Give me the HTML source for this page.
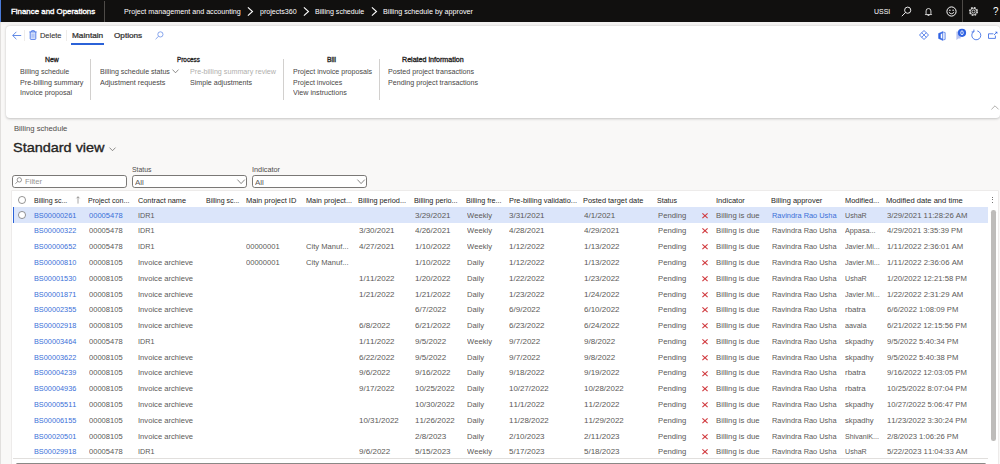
<!DOCTYPE html><html><head><meta charset="utf-8"><title>Billing schedule by approver</title><style>

html,body{margin:0;padding:0}
body{width:1000px;height:464px;overflow:hidden;position:relative;background:#f9f8f7;font-family:"Liberation Sans", sans-serif;color:#323130}
.abs{position:absolute}
.t{position:absolute;white-space:nowrap;line-height:12px;font-kerning:none;transform-origin:0 50%;color:#5c5a58}
.h{color:#252423}
.l{color:#3a6fd8}
.w{color:#fff}
.g{color:#b1afad}
.d{color:#323130}
.a{color:#484644}
svg{position:absolute;overflow:visible}

</style></head><body>
<div class="abs" style="left:0;top:0;width:1000px;height:21.6px;background:#11100f"></div>
<div class="abs" style="left:0;top:0;width:1px;height:21.6px;background:#4a7ad8"></div>
<div class="t w" style="left:11.00px;top:5.58px;font-size:7.57px;-webkit-text-stroke:0.34px currentColor;transform:scaleX(1.0426);">Finance and Operations</div>
<div class="abs" style="left:104.1px;top:0.6px;width:0.7px;height:21.0px;background:#4e4b48"></div>
<div class="t w" style="left:123.70px;top:5.77px;font-size:7.01px;transform:scaleX(1.0246);">Project management and accounting</div>
<div class="t w" style="left:259.50px;top:5.77px;font-size:7.01px;transform:scaleX(1.0140);">projects360</div>
<div class="t w" style="left:315.00px;top:5.77px;font-size:7.01px;transform:scaleX(1.0110);">Billing schedule</div>
<div class="t w" style="left:382.50px;top:5.77px;font-size:7.01px;transform:scaleX(1.0264);">Billing schedule by approver</div>
<svg style="left:247.3px;top:6.8px" width="6.4" height="9" viewBox="0 0 6.4 9"><path d="M0.9 0.4 L5.5 4.5 L0.9 8.6" fill="none" stroke="#fff" stroke-width="1.1"/></svg>
<svg style="left:303.0px;top:6.8px" width="6.4" height="9" viewBox="0 0 6.4 9"><path d="M0.9 0.4 L5.5 4.5 L0.9 8.6" fill="none" stroke="#fff" stroke-width="1.1"/></svg>
<svg style="left:371.1px;top:6.8px" width="6.4" height="9" viewBox="0 0 6.4 9"><path d="M0.9 0.4 L5.5 4.5 L0.9 8.6" fill="none" stroke="#fff" stroke-width="1.1"/></svg>
<div class="t w" style="left:874.00px;top:5.57px;font-size:7.01px;transform:scaleX(0.9901);">USSI</div>
<svg style="left:901px;top:6px" width="11" height="11" viewBox="0 0 11 11"><circle cx="6.7" cy="4.2" r="3.1" fill="none" stroke="#fff" stroke-width="0.9"/><path d="M4.5 6.5 L0.8 10.2" stroke="#fff" stroke-width="0.9"/></svg>
<svg style="left:924.4px;top:6.6px" width="9" height="9.9" viewBox="0 0 10 11"><path d="M2.3 7.6 V4.4 A2.7 2.7 0 0 1 7.7 4.4 V7.6 L8.5 8.4 H1.5 Z" fill="none" stroke="#fff" stroke-width="0.9" stroke-linejoin="round"/><path d="M4 9.4 H6" stroke="#fff" stroke-width="0.9"/></svg>
<svg style="left:945.5px;top:5.8px" width="11" height="11" viewBox="0 0 11 11"><circle cx="5.5" cy="5.5" r="4.6" fill="none" stroke="#fff" stroke-width="1.0"/><circle cx="3.9" cy="4.2" r="0.7" fill="#fff"/><circle cx="7.1" cy="4.2" r="0.7" fill="#fff"/><path d="M2.9 6.2 Q5.5 9.3 8.1 6.2" fill="none" stroke="#fff" stroke-width="0.9"/></svg>
<div class="abs" style="left:962.4px;top:0;width:0.7px;height:21.6px;background:#4e4b48"></div>
<svg style="left:968.4px;top:6px" width="11" height="11" viewBox="0 0 11 11"><circle cx="5.5" cy="5.5" r="3.9" fill="none" stroke="#fff" stroke-width="1.2" stroke-dasharray="1.75 1.313" opacity="0.9"/><circle cx="5.5" cy="5.5" r="3.2" fill="none" stroke="#fff" stroke-width="0.7"/><circle cx="5.5" cy="5.5" r="1.5" fill="none" stroke="#fff" stroke-width="0.75"/></svg>
<div class="t w" style="left:993.2px;top:4.3px;font-size:11.2px;line-height:14px;transform:scaleX(0.88)">?</div>
<div class="abs" style="left:0;top:21.6px;width:1000px;height:4.4px;background:linear-gradient(#f1f0ef,#f9f8f7)"></div>
<div class="abs" style="left:5.5px;top:25.7px;width:994.1px;height:92.3px;background:#fff;border-radius:4px;box-shadow:0 0.6px 2.6px rgba(0,0,0,0.22)"></div>
<svg style="left:11.6px;top:31px" width="10" height="9" viewBox="0 0 10 9"><path d="M9.2 4.5 H0.8 M4.4 0.8 L0.7 4.5 L4.4 8.2" fill="none" stroke="#3b6fe0" stroke-width="0.8"/></svg>
<div class="abs" style="left:24.4px;top:30px;width:0.6px;height:11.4px;background:#eeecea"></div>
<svg style="left:29.4px;top:30.4px" width="8" height="10" viewBox="0 0 8 10"><rect x="1.5" y="2.3" width="5" height="6.6" fill="#dfe8fc"/><path d="M0.4 1.9 H7.6 M2.7 1.9 V0.7 H5.3 V1.9 M1.2 1.9 V8.6 Q1.2 9.4 2 9.4 H6 Q6.8 9.4 6.8 8.6 V1.9" fill="none" stroke="#2f62e2" stroke-width="0.8"/><path d="M3.1 3.6 V7.8 M4.9 3.6 V7.8" stroke="#5b83ea" stroke-width="0.55"/></svg>
<div class="t " style="left:39.80px;top:30.42px;font-size:7.46px;transform:scaleX(0.9972);color:#323130;-webkit-text-stroke:0.1px #323130">Delete</div>
<div class="abs" style="left:66px;top:30px;width:0.6px;height:11.4px;background:#eeecea"></div>
<div class="t d" style="left:72.00px;top:30.39px;font-size:7.54px;-webkit-text-stroke:0.24px currentColor;transform:scaleX(1.0952);">Maintain</div>
<div class="abs" style="left:71.3px;top:42.8px;width:32.4px;height:1.9px;background:#2b62d8"></div>
<div class="t d" style="left:113.80px;top:30.39px;font-size:7.54px;-webkit-text-stroke:0.24px currentColor;transform:scaleX(1.0857);">Options</div>
<svg style="left:154.8px;top:31.4px" width="9" height="9" viewBox="0 0 9 9"><circle cx="5.4" cy="3.4" r="2.6" fill="none" stroke="#6a8fe8" stroke-width="0.8"/><path d="M3.5 5.3 L0.6 8.2" stroke="#6a8fe8" stroke-width="0.8"/></svg>
<svg style="left:919.2px;top:30.3px" width="10" height="10" viewBox="0 0 10 10"><path d="M5 0.5 L9.5 5 L5 9.5 L0.5 5 Z" fill="none" stroke="#2f62e2" stroke-width="0.8" stroke-linejoin="round"/><path d="M2.6 2.6 L7.4 7.4 M7.4 2.6 L2.6 7.4" fill="none" stroke="#2f62e2" stroke-width="0.7"/></svg>
<svg style="left:937.7px;top:30.6px" width="8" height="10" viewBox="0 0 8 10"><path d="M4.5 0.8 L7.2 1.6 V8.4 L4.5 9.2 Z" fill="#dbe4fb" stroke="#2f62e2" stroke-width="0.6" stroke-linejoin="round"/><path d="M0.5 2.5 L4.5 0.7 V2.1 L2.5 3 V7 L4.5 7.9 V9.3 L0.5 7.5 Z" fill="#2f62e2" stroke="#2f62e2" stroke-width="0.4" stroke-linejoin="round"/></svg>
<svg style="left:956px;top:28px" width="12" height="13" viewBox="0 0 12 13"><path d="M0.4 3.6 H4.6 V10.4 H2.4 L0.4 11.9 Z" fill="#b7c2f1"/><circle cx="6.0" cy="4.8" r="4.1" fill="#2f62e2"/><ellipse cx="6.0" cy="4.8" rx="1.25" ry="2.0" fill="none" stroke="#fff" stroke-width="0.85"/></svg>
<svg style="left:970.8px;top:30.2px" width="10" height="11" viewBox="0 0 10 11"><path d="M2.7 1.6 A4.5 4.5 0 1 0 6.3 0.9" fill="none" stroke="#2f62e2" stroke-width="0.8"/><path d="M2.9 -0.4 V1.9 H0.6" fill="none" stroke="#2f62e2" stroke-width="0.8"/></svg>
<svg style="left:988px;top:30.6px" width="10" height="9" viewBox="0 0 10 9"><path d="M5.4 2.8 H0.5 V7.4 H7.4 V4.6" fill="none" stroke="#2f62e2" stroke-width="0.8"/><path d="M6.0 4.0 L8.6 1.4" fill="none" stroke="#2f62e2" stroke-width="0.8"/><path d="M7.0 0.7 H9.3 V3.0 Z" fill="#2f62e2"/></svg>
<div class="t h" style="left:44.50px;top:53.75px;font-size:6.48px;-webkit-text-stroke:0.30px currentColor;transform:scaleX(1.0601);">New</div>
<div class="t a" style="left:19.50px;top:66.07px;font-size:7.01px;transform:scaleX(1.0125);">Billing schedule</div>
<div class="t a" style="left:19.50px;top:76.57px;font-size:7.01px;transform:scaleX(1.0252);">Pre-billing summary</div>
<div class="t a" style="left:19.50px;top:86.97px;font-size:7.01px;transform:scaleX(1.0236);">Invoice proposal</div>
<div class="abs" style="left:90.2px;top:58.6px;width:0.6px;height:41px;background:#d2d0ce"></div>
<div class="t h" style="left:176.50px;top:53.75px;font-size:6.48px;-webkit-text-stroke:0.30px currentColor;transform:scaleX(0.9820);">Process</div>
<div class="t a" style="left:99.50px;top:66.07px;font-size:7.01px;transform:scaleX(1.0092);">Billing schedule status</div>
<svg style="left:172.4px;top:69.2px" width="7" height="5" viewBox="0 0 7 5"><path d="M0.5 0.6 L3.5 3.8 L6.5 0.6" fill="none" stroke="#605e5c" stroke-width="0.7"/></svg>
<div class="t a" style="left:99.50px;top:76.57px;font-size:7.01px;transform:scaleX(1.0237);">Adjustment requests</div>
<div class="t g" style="left:189.50px;top:66.07px;font-size:7.01px;transform:scaleX(1.0234);">Pre-billing summary review</div>
<div class="t a" style="left:189.50px;top:76.57px;font-size:7.01px;transform:scaleX(1.0155);">Simple adjustments</div>
<div class="abs" style="left:283.2px;top:58.6px;width:0.6px;height:41px;background:#d2d0ce"></div>
<div class="t h" style="left:327.00px;top:53.75px;font-size:6.48px;-webkit-text-stroke:0.30px currentColor;transform:scaleX(1.0440);">Bill</div>
<div class="t a" style="left:292.50px;top:66.07px;font-size:7.01px;transform:scaleX(1.0169);">Project invoice proposals</div>
<div class="t a" style="left:292.50px;top:76.57px;font-size:7.01px;transform:scaleX(1.0044);">Project invoices</div>
<div class="t a" style="left:292.50px;top:86.97px;font-size:7.01px;transform:scaleX(1.0229);">View instructions</div>
<div class="abs" style="left:378.7px;top:58.6px;width:0.6px;height:41px;background:#d2d0ce"></div>
<div class="t h" style="left:402.20px;top:53.75px;font-size:6.48px;-webkit-text-stroke:0.30px currentColor;transform:scaleX(1.0983);">Related information</div>
<div class="t a" style="left:387.70px;top:66.07px;font-size:7.01px;transform:scaleX(1.0200);">Posted project transactions</div>
<div class="t a" style="left:387.70px;top:76.57px;font-size:7.01px;transform:scaleX(1.0202);">Pending project transactions</div>
<svg style="left:990.6px;top:104.8px" width="8" height="5" viewBox="0 0 8 5"><path d="M0.4 4.4 L4 0.8 L7.6 4.4" fill="none" stroke="#a9a7a5" stroke-width="0.9"/></svg>
<div class="t " style="left:13.50px;top:123.06px;font-size:7.34px;transform:scaleX(1.0483);color:#4f4d4b">Billing schedule</div>
<div class="t " style="left:13.30px;top:141.68px;font-size:13.34px;-webkit-text-stroke:0.35px currentColor;transform:scaleX(1.0837);color:#252423;line-height:20px;margin-top:-4px">Standard view</div>
<svg style="left:108.9px;top:146.6px" width="7" height="5" viewBox="0 0 7 5"><path d="M0.5 0.6 L3.5 3.7 L6.5 0.6" fill="none" stroke="#605e5c" stroke-width="0.7"/></svg>
<div class="t " style="left:132.20px;top:163.86px;font-size:7.34px;transform:scaleX(0.9361);color:#4f4d4b">Status</div>
<div class="t " style="left:251.60px;top:163.86px;font-size:7.34px;transform:scaleX(0.9981);color:#4f4d4b">Indicator</div>
<div class="abs" style="left:12.1px;top:175.1px;width:115.4px;height:13.1px;box-sizing:border-box;border:1px solid #7a7876;border-radius:2.8px;background:#fff"></div>
<div class="abs" style="left:132px;top:175.1px;width:114.6px;height:13.1px;box-sizing:border-box;border:1px solid #7a7876;border-radius:2.8px;background:#fff"></div>
<div class="abs" style="left:251.6px;top:175.1px;width:115.3px;height:13.1px;box-sizing:border-box;border:1px solid #7a7876;border-radius:2.8px;background:#fff"></div>
<svg style="left:14.8px;top:177.3px" width="7.4" height="7.4" viewBox="0 0 7 7"><circle cx="4.1" cy="2.7" r="2.1" fill="none" stroke="#605e5c" stroke-width="0.6"/><path d="M2.6 4.2 L0.4 6.4" stroke="#605e5c" stroke-width="0.6"/></svg>
<div class="t " style="left:25.00px;top:176.15px;font-size:7.65px;transform:scaleX(1.0071);color:#979593">Filter</div>
<div class="t " style="left:135.40px;top:176.55px;font-size:7.65px;transform:scaleX(1.0419);">All</div>
<div class="t " style="left:255.00px;top:176.55px;font-size:7.65px;transform:scaleX(1.0419);">All</div>
<svg style="left:236.6px;top:179.0px" width="8.2" height="5.4" viewBox="0 0 8.2 5.4"><path d="M0.4 0.6 L4.1 4.6 L7.8 0.6" fill="none" stroke="#605e5c" stroke-width="0.75"/></svg>
<svg style="left:356.6px;top:179.0px" width="8.2" height="5.4" viewBox="0 0 8.2 5.4"><path d="M0.4 0.6 L4.1 4.6 L7.8 0.6" fill="none" stroke="#605e5c" stroke-width="0.75"/></svg>
<div class="abs" style="left:12.4px;top:191.3px;width:986px;height:273px;background:#fff;box-shadow:0 0 0 0.6px #e4e3e1"></div>
<div class="abs" style="left:12.6px;top:207.0px;width:975px;height:0.5px;background:#e6e4e2"></div>
<div class="abs" style="left:12.6px;top:207.4px;width:975px;height:15.2px;background:#dbe5fa"></div>
<div class="abs" style="left:12.6px;top:207.4px;width:1.6px;height:15.2px;background:#2b62d8"></div>
<svg style="left:18px;top:196.2px" width="8" height="8" viewBox="0 0 8 8"><circle cx="4" cy="4" r="3.55" fill="#fff" stroke="#605e5c" stroke-width="0.65"/></svg>
<div class="t h" style="left:34.20px;top:194.90px;font-size:7.21px;transform:scaleX(0.9668);">Billing sc...</div>
<div class="t h" style="left:88.00px;top:194.90px;font-size:7.21px;transform:scaleX(0.9840);">Project con...</div>
<div class="t h" style="left:137.50px;top:194.90px;font-size:7.21px;transform:scaleX(1.0163);">Contract name</div>
<div class="t h" style="left:205.50px;top:194.90px;font-size:7.21px;transform:scaleX(0.9668);">Billing sc...</div>
<div class="t h" style="left:246.00px;top:194.90px;font-size:7.21px;transform:scaleX(1.0397);">Main project ID</div>
<div class="t h" style="left:305.50px;top:194.90px;font-size:7.21px;transform:scaleX(1.0169);">Main project...</div>
<div class="t h" style="left:358.00px;top:194.90px;font-size:7.21px;transform:scaleX(1.0154);">Billing period...</div>
<div class="t h" style="left:414.20px;top:194.90px;font-size:7.21px;transform:scaleX(1.0090);">Billing perio...</div>
<div class="t h" style="left:466.20px;top:194.90px;font-size:7.21px;transform:scaleX(0.9959);">Billing fre...</div>
<div class="t h" style="left:508.70px;top:194.90px;font-size:7.21px;transform:scaleX(1.0229);">Pre-billing validatio...</div>
<div class="t h" style="left:583.00px;top:194.90px;font-size:7.21px;transform:scaleX(1.0258);">Posted target date</div>
<div class="t h" style="left:657.00px;top:194.90px;font-size:7.21px;transform:scaleX(0.9793);">Status</div>
<div class="t h" style="left:715.70px;top:194.90px;font-size:7.21px;transform:scaleX(1.0442);">Indicator</div>
<div class="t h" style="left:771.20px;top:194.90px;font-size:7.21px;transform:scaleX(1.0322);">Billing approver</div>
<div class="t h" style="left:844.80px;top:194.90px;font-size:7.21px;transform:scaleX(1.0296);">Modified...</div>
<div class="t h" style="left:886.40px;top:194.90px;font-size:7.21px;transform:scaleX(1.0531);">Modified date and time</div>
<svg style="left:76.2px;top:195.6px" width="4" height="8" viewBox="0 0 4 8"><path d="M2 7.6 V0.8 M0.5 2.3 L2 0.7 L3.5 2.3" fill="none" stroke="#605e5c" stroke-width="0.55"/></svg>
<div class="abs" style="left:991.8px;top:196.7px;width:1.1px;height:1.1px;background:#484644;border-radius:50%"></div>
<div class="abs" style="left:991.8px;top:199.39999999999998px;width:1.1px;height:1.1px;background:#484644;border-radius:50%"></div>
<div class="abs" style="left:991.8px;top:202.1px;width:1.1px;height:1.1px;background:#484644;border-radius:50%"></div>
<div class="t l" style="left:34.30px;top:209.66px;font-size:7.62px;transform:scaleX(0.9605);">BS00000261</div>
<div class="t l" style="left:88.90px;top:209.66px;font-size:7.62px;transform:scaleX(0.9940);">00005478</div>
<div class="t " style="left:137.80px;top:209.66px;font-size:7.62px;transform:scaleX(0.9476);">IDR1</div>
<div class="t " style="left:414.70px;top:209.66px;font-size:7.62px;transform:scaleX(1.0497);">3/29/2021</div>
<div class="t " style="left:466.70px;top:209.66px;font-size:7.62px;transform:scaleX(1.0008);">Weekly</div>
<div class="t " style="left:509.20px;top:209.66px;font-size:7.62px;transform:scaleX(1.0497);">3/31/2021</div>
<div class="t " style="left:583.50px;top:209.66px;font-size:7.62px;transform:scaleX(1.0576);">4/1/2021</div>
<div class="t " style="left:657.50px;top:209.66px;font-size:7.62px;transform:scaleX(1.0150);">Pending</div>
<svg style="left:702.2px;top:212.70px" width="6" height="5.4" viewBox="0 0 6 5.4"><path d="M0.4 0.3 L5.6 5.1 M5.6 0.3 L0.4 5.1" stroke="#d13b40" stroke-width="1.15"/></svg>
<div class="t " style="left:716.20px;top:209.66px;font-size:7.62px;transform:scaleX(1.0201);">Billing is due</div>
<div class="t l" style="left:772.10px;top:209.66px;font-size:7.62px;transform:scaleX(0.9715);">Ravindra Rao Usha</div>
<div class="t " style="left:845.30px;top:209.66px;font-size:7.62px;transform:scaleX(0.9341);">UshaR</div>
<div class="t " style="left:886.90px;top:209.66px;font-size:7.62px;transform:scaleX(1.0172);">3/29/2021 11:28:26 AM</div>
<div class="t l" style="left:34.30px;top:225.44px;font-size:7.62px;transform:scaleX(0.9605);">BS00000322</div>
<div class="t " style="left:88.90px;top:225.44px;font-size:7.62px;transform:scaleX(0.9940);">00005478</div>
<div class="t " style="left:137.80px;top:225.44px;font-size:7.62px;transform:scaleX(0.9476);">IDR1</div>
<div class="t " style="left:358.50px;top:225.44px;font-size:7.62px;transform:scaleX(1.0497);">3/30/2021</div>
<div class="t " style="left:414.70px;top:225.44px;font-size:7.62px;transform:scaleX(1.0497);">4/26/2021</div>
<div class="t " style="left:466.70px;top:225.44px;font-size:7.62px;transform:scaleX(1.0008);">Weekly</div>
<div class="t " style="left:509.20px;top:225.44px;font-size:7.62px;transform:scaleX(1.0497);">4/28/2021</div>
<div class="t " style="left:583.50px;top:225.44px;font-size:7.62px;transform:scaleX(1.0497);">4/29/2021</div>
<div class="t " style="left:657.50px;top:225.44px;font-size:7.62px;transform:scaleX(1.0150);">Pending</div>
<svg style="left:702.2px;top:228.48px" width="6" height="5.4" viewBox="0 0 6 5.4"><path d="M0.4 0.3 L5.6 5.1 M5.6 0.3 L0.4 5.1" stroke="#d13b40" stroke-width="1.15"/></svg>
<div class="t " style="left:716.20px;top:225.44px;font-size:7.62px;transform:scaleX(1.0201);">Billing is due</div>
<div class="t " style="left:772.10px;top:225.44px;font-size:7.62px;transform:scaleX(0.9715);">Ravindra Rao Usha</div>
<div class="t " style="left:845.30px;top:225.44px;font-size:7.62px;transform:scaleX(0.9501);">Appasa...</div>
<div class="t " style="left:886.90px;top:225.44px;font-size:7.62px;transform:scaleX(1.0098);">4/29/2021 3:35:39 PM</div>
<div class="t l" style="left:34.30px;top:241.22px;font-size:7.62px;transform:scaleX(0.9605);">BS00000652</div>
<div class="t " style="left:88.90px;top:241.22px;font-size:7.62px;transform:scaleX(0.9940);">00005478</div>
<div class="t " style="left:137.80px;top:241.22px;font-size:7.62px;transform:scaleX(0.9476);">IDR1</div>
<div class="t " style="left:246.30px;top:241.22px;font-size:7.62px;transform:scaleX(0.9940);">00000001</div>
<div class="t " style="left:305.80px;top:241.22px;font-size:7.62px;transform:scaleX(0.9972);">City Manuf...</div>
<div class="t " style="left:358.50px;top:241.22px;font-size:7.62px;transform:scaleX(1.0497);">4/27/2021</div>
<div class="t " style="left:414.70px;top:241.22px;font-size:7.62px;transform:scaleX(1.0497);">1/10/2022</div>
<div class="t " style="left:466.70px;top:241.22px;font-size:7.62px;transform:scaleX(1.0008);">Weekly</div>
<div class="t " style="left:509.20px;top:241.22px;font-size:7.62px;transform:scaleX(1.0497);">1/12/2022</div>
<div class="t " style="left:583.50px;top:241.22px;font-size:7.62px;transform:scaleX(1.0497);">1/13/2022</div>
<div class="t " style="left:657.50px;top:241.22px;font-size:7.62px;transform:scaleX(1.0150);">Pending</div>
<svg style="left:702.2px;top:244.26px" width="6" height="5.4" viewBox="0 0 6 5.4"><path d="M0.4 0.3 L5.6 5.1 M5.6 0.3 L0.4 5.1" stroke="#d13b40" stroke-width="1.15"/></svg>
<div class="t " style="left:716.20px;top:241.22px;font-size:7.62px;transform:scaleX(1.0201);">Billing is due</div>
<div class="t " style="left:772.10px;top:241.22px;font-size:7.62px;transform:scaleX(0.9715);">Ravindra Rao Usha</div>
<div class="t " style="left:845.30px;top:241.22px;font-size:7.62px;transform:scaleX(0.9475);">Javier.Mi...</div>
<div class="t " style="left:886.90px;top:241.22px;font-size:7.62px;transform:scaleX(1.0186);">1/11/2022 2:36:01 AM</div>
<div class="t l" style="left:34.30px;top:257.00px;font-size:7.62px;transform:scaleX(0.9605);">BS00000810</div>
<div class="t " style="left:88.90px;top:257.00px;font-size:7.62px;transform:scaleX(0.9940);">00008105</div>
<div class="t " style="left:137.80px;top:257.00px;font-size:7.62px;transform:scaleX(1.0003);">Invoice archieve</div>
<div class="t " style="left:246.30px;top:257.00px;font-size:7.62px;transform:scaleX(0.9940);">00000001</div>
<div class="t " style="left:305.80px;top:257.00px;font-size:7.62px;transform:scaleX(0.9972);">City Manuf...</div>
<div class="t " style="left:414.70px;top:257.00px;font-size:7.62px;transform:scaleX(1.0497);">1/10/2022</div>
<div class="t " style="left:466.70px;top:257.00px;font-size:7.62px;transform:scaleX(1.0041);">Daily</div>
<div class="t " style="left:509.20px;top:257.00px;font-size:7.62px;transform:scaleX(1.0497);">1/12/2022</div>
<div class="t " style="left:583.50px;top:257.00px;font-size:7.62px;transform:scaleX(1.0497);">1/13/2022</div>
<div class="t " style="left:657.50px;top:257.00px;font-size:7.62px;transform:scaleX(1.0150);">Pending</div>
<svg style="left:702.2px;top:260.04px" width="6" height="5.4" viewBox="0 0 6 5.4"><path d="M0.4 0.3 L5.6 5.1 M5.6 0.3 L0.4 5.1" stroke="#d13b40" stroke-width="1.15"/></svg>
<div class="t " style="left:716.20px;top:257.00px;font-size:7.62px;transform:scaleX(1.0201);">Billing is due</div>
<div class="t " style="left:772.10px;top:257.00px;font-size:7.62px;transform:scaleX(0.9715);">Ravindra Rao Usha</div>
<div class="t " style="left:845.30px;top:257.00px;font-size:7.62px;transform:scaleX(0.9475);">Javier.Mi...</div>
<div class="t " style="left:886.90px;top:257.00px;font-size:7.62px;transform:scaleX(1.0186);">1/11/2022 2:36:06 AM</div>
<div class="t l" style="left:34.30px;top:272.78px;font-size:7.62px;transform:scaleX(0.9605);">BS00001530</div>
<div class="t " style="left:88.90px;top:272.78px;font-size:7.62px;transform:scaleX(0.9940);">00008105</div>
<div class="t " style="left:137.80px;top:272.78px;font-size:7.62px;transform:scaleX(1.0003);">Invoice archieve</div>
<div class="t " style="left:358.50px;top:272.78px;font-size:7.62px;transform:scaleX(1.0497);">1/11/2022</div>
<div class="t " style="left:414.70px;top:272.78px;font-size:7.62px;transform:scaleX(1.0497);">1/20/2022</div>
<div class="t " style="left:466.70px;top:272.78px;font-size:7.62px;transform:scaleX(1.0041);">Daily</div>
<div class="t " style="left:509.20px;top:272.78px;font-size:7.62px;transform:scaleX(1.0497);">1/22/2022</div>
<div class="t " style="left:583.50px;top:272.78px;font-size:7.62px;transform:scaleX(1.0497);">1/23/2022</div>
<div class="t " style="left:657.50px;top:272.78px;font-size:7.62px;transform:scaleX(1.0150);">Pending</div>
<svg style="left:702.2px;top:275.82px" width="6" height="5.4" viewBox="0 0 6 5.4"><path d="M0.4 0.3 L5.6 5.1 M5.6 0.3 L0.4 5.1" stroke="#d13b40" stroke-width="1.15"/></svg>
<div class="t " style="left:716.20px;top:272.78px;font-size:7.62px;transform:scaleX(1.0201);">Billing is due</div>
<div class="t " style="left:772.10px;top:272.78px;font-size:7.62px;transform:scaleX(0.9715);">Ravindra Rao Usha</div>
<div class="t " style="left:845.30px;top:272.78px;font-size:7.62px;transform:scaleX(0.9341);">UshaR</div>
<div class="t " style="left:886.90px;top:272.78px;font-size:7.62px;transform:scaleX(1.0090);">1/20/2022 12:21:58 PM</div>
<div class="t l" style="left:34.30px;top:288.56px;font-size:7.62px;transform:scaleX(0.9605);">BS00001871</div>
<div class="t " style="left:88.90px;top:288.56px;font-size:7.62px;transform:scaleX(0.9940);">00008105</div>
<div class="t " style="left:137.80px;top:288.56px;font-size:7.62px;transform:scaleX(1.0003);">Invoice archieve</div>
<div class="t " style="left:358.50px;top:288.56px;font-size:7.62px;transform:scaleX(1.0497);">1/21/2022</div>
<div class="t " style="left:414.70px;top:288.56px;font-size:7.62px;transform:scaleX(1.0497);">1/21/2022</div>
<div class="t " style="left:466.70px;top:288.56px;font-size:7.62px;transform:scaleX(1.0041);">Daily</div>
<div class="t " style="left:509.20px;top:288.56px;font-size:7.62px;transform:scaleX(1.0497);">1/23/2022</div>
<div class="t " style="left:583.50px;top:288.56px;font-size:7.62px;transform:scaleX(1.0497);">1/24/2022</div>
<div class="t " style="left:657.50px;top:288.56px;font-size:7.62px;transform:scaleX(1.0150);">Pending</div>
<svg style="left:702.2px;top:291.60px" width="6" height="5.4" viewBox="0 0 6 5.4"><path d="M0.4 0.3 L5.6 5.1 M5.6 0.3 L0.4 5.1" stroke="#d13b40" stroke-width="1.15"/></svg>
<div class="t " style="left:716.20px;top:288.56px;font-size:7.62px;transform:scaleX(1.0201);">Billing is due</div>
<div class="t " style="left:772.10px;top:288.56px;font-size:7.62px;transform:scaleX(0.9715);">Ravindra Rao Usha</div>
<div class="t " style="left:845.30px;top:288.56px;font-size:7.62px;transform:scaleX(0.9475);">Javier.Mi...</div>
<div class="t " style="left:886.90px;top:288.56px;font-size:7.62px;transform:scaleX(1.0186);">1/22/2022 2:31:29 AM</div>
<div class="t l" style="left:34.30px;top:304.34px;font-size:7.62px;transform:scaleX(0.9605);">BS00002355</div>
<div class="t " style="left:88.90px;top:304.34px;font-size:7.62px;transform:scaleX(0.9940);">00008105</div>
<div class="t " style="left:137.80px;top:304.34px;font-size:7.62px;transform:scaleX(1.0003);">Invoice archieve</div>
<div class="t " style="left:414.70px;top:304.34px;font-size:7.62px;transform:scaleX(1.0576);">6/7/2022</div>
<div class="t " style="left:466.70px;top:304.34px;font-size:7.62px;transform:scaleX(1.0041);">Daily</div>
<div class="t " style="left:509.20px;top:304.34px;font-size:7.62px;transform:scaleX(1.0576);">6/9/2022</div>
<div class="t " style="left:583.50px;top:304.34px;font-size:7.62px;transform:scaleX(1.0497);">6/10/2022</div>
<div class="t " style="left:657.50px;top:304.34px;font-size:7.62px;transform:scaleX(1.0150);">Pending</div>
<svg style="left:702.2px;top:307.38px" width="6" height="5.4" viewBox="0 0 6 5.4"><path d="M0.4 0.3 L5.6 5.1 M5.6 0.3 L0.4 5.1" stroke="#d13b40" stroke-width="1.15"/></svg>
<div class="t " style="left:716.20px;top:304.34px;font-size:7.62px;transform:scaleX(1.0201);">Billing is due</div>
<div class="t " style="left:772.10px;top:304.34px;font-size:7.62px;transform:scaleX(0.9715);">Ravindra Rao Usha</div>
<div class="t " style="left:845.30px;top:304.34px;font-size:7.62px;transform:scaleX(1.0369);">rbatra</div>
<div class="t " style="left:886.90px;top:304.34px;font-size:7.62px;transform:scaleX(1.0107);">6/6/2022 1:08:09 PM</div>
<div class="t l" style="left:34.30px;top:320.12px;font-size:7.62px;transform:scaleX(0.9605);">BS00002918</div>
<div class="t " style="left:88.90px;top:320.12px;font-size:7.62px;transform:scaleX(0.9940);">00008105</div>
<div class="t " style="left:137.80px;top:320.12px;font-size:7.62px;transform:scaleX(1.0003);">Invoice archieve</div>
<div class="t " style="left:358.50px;top:320.12px;font-size:7.62px;transform:scaleX(1.0576);">6/8/2022</div>
<div class="t " style="left:414.70px;top:320.12px;font-size:7.62px;transform:scaleX(1.0497);">6/21/2022</div>
<div class="t " style="left:466.70px;top:320.12px;font-size:7.62px;transform:scaleX(1.0041);">Daily</div>
<div class="t " style="left:509.20px;top:320.12px;font-size:7.62px;transform:scaleX(1.0497);">6/23/2022</div>
<div class="t " style="left:583.50px;top:320.12px;font-size:7.62px;transform:scaleX(1.0497);">6/24/2022</div>
<div class="t " style="left:657.50px;top:320.12px;font-size:7.62px;transform:scaleX(1.0150);">Pending</div>
<svg style="left:702.2px;top:323.16px" width="6" height="5.4" viewBox="0 0 6 5.4"><path d="M0.4 0.3 L5.6 5.1 M5.6 0.3 L0.4 5.1" stroke="#d13b40" stroke-width="1.15"/></svg>
<div class="t " style="left:716.20px;top:320.12px;font-size:7.62px;transform:scaleX(1.0201);">Billing is due</div>
<div class="t " style="left:772.10px;top:320.12px;font-size:7.62px;transform:scaleX(0.9715);">Ravindra Rao Usha</div>
<div class="t " style="left:845.30px;top:320.12px;font-size:7.62px;transform:scaleX(0.9596);">aavala</div>
<div class="t " style="left:886.90px;top:320.12px;font-size:7.62px;transform:scaleX(1.0090);">6/21/2022 12:15:56 PM</div>
<div class="t l" style="left:34.30px;top:335.90px;font-size:7.62px;transform:scaleX(0.9605);">BS00003464</div>
<div class="t " style="left:88.90px;top:335.90px;font-size:7.62px;transform:scaleX(0.9940);">00005478</div>
<div class="t " style="left:137.80px;top:335.90px;font-size:7.62px;transform:scaleX(0.9476);">IDR1</div>
<div class="t " style="left:358.50px;top:335.90px;font-size:7.62px;transform:scaleX(1.0497);">1/11/2022</div>
<div class="t " style="left:414.70px;top:335.90px;font-size:7.62px;transform:scaleX(1.0576);">9/5/2022</div>
<div class="t " style="left:466.70px;top:335.90px;font-size:7.62px;transform:scaleX(1.0008);">Weekly</div>
<div class="t " style="left:509.20px;top:335.90px;font-size:7.62px;transform:scaleX(1.0576);">9/7/2022</div>
<div class="t " style="left:583.50px;top:335.90px;font-size:7.62px;transform:scaleX(1.0576);">9/8/2022</div>
<div class="t " style="left:657.50px;top:335.90px;font-size:7.62px;transform:scaleX(1.0150);">Pending</div>
<svg style="left:702.2px;top:338.94px" width="6" height="5.4" viewBox="0 0 6 5.4"><path d="M0.4 0.3 L5.6 5.1 M5.6 0.3 L0.4 5.1" stroke="#d13b40" stroke-width="1.15"/></svg>
<div class="t " style="left:716.20px;top:335.90px;font-size:7.62px;transform:scaleX(1.0201);">Billing is due</div>
<div class="t " style="left:772.10px;top:335.90px;font-size:7.62px;transform:scaleX(0.9715);">Ravindra Rao Usha</div>
<div class="t " style="left:845.30px;top:335.90px;font-size:7.62px;transform:scaleX(1.0059);">skpadhy</div>
<div class="t " style="left:886.90px;top:335.90px;font-size:7.62px;transform:scaleX(1.0107);">9/5/2022 5:40:34 PM</div>
<div class="t l" style="left:34.30px;top:351.68px;font-size:7.62px;transform:scaleX(0.9605);">BS00003622</div>
<div class="t " style="left:88.90px;top:351.68px;font-size:7.62px;transform:scaleX(0.9940);">00008105</div>
<div class="t " style="left:137.80px;top:351.68px;font-size:7.62px;transform:scaleX(1.0003);">Invoice archieve</div>
<div class="t " style="left:358.50px;top:351.68px;font-size:7.62px;transform:scaleX(1.0497);">6/22/2022</div>
<div class="t " style="left:414.70px;top:351.68px;font-size:7.62px;transform:scaleX(1.0576);">9/5/2022</div>
<div class="t " style="left:466.70px;top:351.68px;font-size:7.62px;transform:scaleX(1.0041);">Daily</div>
<div class="t " style="left:509.20px;top:351.68px;font-size:7.62px;transform:scaleX(1.0576);">9/7/2022</div>
<div class="t " style="left:583.50px;top:351.68px;font-size:7.62px;transform:scaleX(1.0576);">9/8/2022</div>
<div class="t " style="left:657.50px;top:351.68px;font-size:7.62px;transform:scaleX(1.0150);">Pending</div>
<svg style="left:702.2px;top:354.72px" width="6" height="5.4" viewBox="0 0 6 5.4"><path d="M0.4 0.3 L5.6 5.1 M5.6 0.3 L0.4 5.1" stroke="#d13b40" stroke-width="1.15"/></svg>
<div class="t " style="left:716.20px;top:351.68px;font-size:7.62px;transform:scaleX(1.0201);">Billing is due</div>
<div class="t " style="left:772.10px;top:351.68px;font-size:7.62px;transform:scaleX(0.9715);">Ravindra Rao Usha</div>
<div class="t " style="left:845.30px;top:351.68px;font-size:7.62px;transform:scaleX(1.0059);">skpadhy</div>
<div class="t " style="left:886.90px;top:351.68px;font-size:7.62px;transform:scaleX(1.0107);">9/5/2022 5:40:38 PM</div>
<div class="t l" style="left:34.30px;top:367.46px;font-size:7.62px;transform:scaleX(0.9605);">BS00004239</div>
<div class="t " style="left:88.90px;top:367.46px;font-size:7.62px;transform:scaleX(0.9940);">00008105</div>
<div class="t " style="left:137.80px;top:367.46px;font-size:7.62px;transform:scaleX(1.0003);">Invoice archieve</div>
<div class="t " style="left:358.50px;top:367.46px;font-size:7.62px;transform:scaleX(1.0576);">9/6/2022</div>
<div class="t " style="left:414.70px;top:367.46px;font-size:7.62px;transform:scaleX(1.0497);">9/16/2022</div>
<div class="t " style="left:466.70px;top:367.46px;font-size:7.62px;transform:scaleX(1.0041);">Daily</div>
<div class="t " style="left:509.20px;top:367.46px;font-size:7.62px;transform:scaleX(1.0497);">9/18/2022</div>
<div class="t " style="left:583.50px;top:367.46px;font-size:7.62px;transform:scaleX(1.0497);">9/19/2022</div>
<div class="t " style="left:657.50px;top:367.46px;font-size:7.62px;transform:scaleX(1.0150);">Pending</div>
<svg style="left:702.2px;top:370.50px" width="6" height="5.4" viewBox="0 0 6 5.4"><path d="M0.4 0.3 L5.6 5.1 M5.6 0.3 L0.4 5.1" stroke="#d13b40" stroke-width="1.15"/></svg>
<div class="t " style="left:716.20px;top:367.46px;font-size:7.62px;transform:scaleX(1.0201);">Billing is due</div>
<div class="t " style="left:772.10px;top:367.46px;font-size:7.62px;transform:scaleX(0.9715);">Ravindra Rao Usha</div>
<div class="t " style="left:845.30px;top:367.46px;font-size:7.62px;transform:scaleX(1.0369);">rbatra</div>
<div class="t " style="left:886.90px;top:367.46px;font-size:7.62px;transform:scaleX(1.0090);">9/16/2022 12:03:05 PM</div>
<div class="t l" style="left:34.30px;top:383.24px;font-size:7.62px;transform:scaleX(0.9605);">BS00004936</div>
<div class="t " style="left:88.90px;top:383.24px;font-size:7.62px;transform:scaleX(0.9940);">00008105</div>
<div class="t " style="left:137.80px;top:383.24px;font-size:7.62px;transform:scaleX(1.0003);">Invoice archieve</div>
<div class="t " style="left:358.50px;top:383.24px;font-size:7.62px;transform:scaleX(1.0497);">9/17/2022</div>
<div class="t " style="left:414.70px;top:383.24px;font-size:7.62px;transform:scaleX(1.0435);">10/25/2022</div>
<div class="t " style="left:466.70px;top:383.24px;font-size:7.62px;transform:scaleX(1.0041);">Daily</div>
<div class="t " style="left:509.20px;top:383.24px;font-size:7.62px;transform:scaleX(1.0435);">10/27/2022</div>
<div class="t " style="left:583.50px;top:383.24px;font-size:7.62px;transform:scaleX(1.0435);">10/28/2022</div>
<div class="t " style="left:657.50px;top:383.24px;font-size:7.62px;transform:scaleX(1.0150);">Pending</div>
<svg style="left:702.2px;top:386.28px" width="6" height="5.4" viewBox="0 0 6 5.4"><path d="M0.4 0.3 L5.6 5.1 M5.6 0.3 L0.4 5.1" stroke="#d13b40" stroke-width="1.15"/></svg>
<div class="t " style="left:716.20px;top:383.24px;font-size:7.62px;transform:scaleX(1.0201);">Billing is due</div>
<div class="t " style="left:772.10px;top:383.24px;font-size:7.62px;transform:scaleX(0.9715);">Ravindra Rao Usha</div>
<div class="t " style="left:845.30px;top:383.24px;font-size:7.62px;transform:scaleX(1.0369);">rbatra</div>
<div class="t " style="left:886.90px;top:383.24px;font-size:7.62px;transform:scaleX(1.0090);">10/25/2022 8:07:04 PM</div>
<div class="t l" style="left:34.30px;top:399.02px;font-size:7.62px;transform:scaleX(0.9605);">BS00005511</div>
<div class="t " style="left:88.90px;top:399.02px;font-size:7.62px;transform:scaleX(0.9940);">00008105</div>
<div class="t " style="left:137.80px;top:399.02px;font-size:7.62px;transform:scaleX(1.0003);">Invoice archieve</div>
<div class="t " style="left:414.70px;top:399.02px;font-size:7.62px;transform:scaleX(1.0435);">10/30/2022</div>
<div class="t " style="left:466.70px;top:399.02px;font-size:7.62px;transform:scaleX(1.0041);">Daily</div>
<div class="t " style="left:509.20px;top:399.02px;font-size:7.62px;transform:scaleX(1.0497);">11/1/2022</div>
<div class="t " style="left:583.50px;top:399.02px;font-size:7.62px;transform:scaleX(1.0497);">11/2/2022</div>
<div class="t " style="left:657.50px;top:399.02px;font-size:7.62px;transform:scaleX(1.0150);">Pending</div>
<svg style="left:702.2px;top:402.06px" width="6" height="5.4" viewBox="0 0 6 5.4"><path d="M0.4 0.3 L5.6 5.1 M5.6 0.3 L0.4 5.1" stroke="#d13b40" stroke-width="1.15"/></svg>
<div class="t " style="left:716.20px;top:399.02px;font-size:7.62px;transform:scaleX(1.0201);">Billing is due</div>
<div class="t " style="left:772.10px;top:399.02px;font-size:7.62px;transform:scaleX(0.9715);">Ravindra Rao Usha</div>
<div class="t " style="left:845.30px;top:399.02px;font-size:7.62px;transform:scaleX(1.0059);">skpadhy</div>
<div class="t " style="left:886.90px;top:399.02px;font-size:7.62px;transform:scaleX(1.0090);">10/27/2022 5:06:47 PM</div>
<div class="t l" style="left:34.30px;top:414.80px;font-size:7.62px;transform:scaleX(0.9605);">BS00006155</div>
<div class="t " style="left:88.90px;top:414.80px;font-size:7.62px;transform:scaleX(0.9940);">00008105</div>
<div class="t " style="left:137.80px;top:414.80px;font-size:7.62px;transform:scaleX(1.0003);">Invoice archieve</div>
<div class="t " style="left:358.50px;top:414.80px;font-size:7.62px;transform:scaleX(1.0435);">10/31/2022</div>
<div class="t " style="left:414.70px;top:414.80px;font-size:7.62px;transform:scaleX(1.0435);">11/26/2022</div>
<div class="t " style="left:466.70px;top:414.80px;font-size:7.62px;transform:scaleX(1.0041);">Daily</div>
<div class="t " style="left:509.20px;top:414.80px;font-size:7.62px;transform:scaleX(1.0435);">11/28/2022</div>
<div class="t " style="left:583.50px;top:414.80px;font-size:7.62px;transform:scaleX(1.0435);">11/29/2022</div>
<div class="t " style="left:657.50px;top:414.80px;font-size:7.62px;transform:scaleX(1.0150);">Pending</div>
<svg style="left:702.2px;top:417.84px" width="6" height="5.4" viewBox="0 0 6 5.4"><path d="M0.4 0.3 L5.6 5.1 M5.6 0.3 L0.4 5.1" stroke="#d13b40" stroke-width="1.15"/></svg>
<div class="t " style="left:716.20px;top:414.80px;font-size:7.62px;transform:scaleX(1.0201);">Billing is due</div>
<div class="t " style="left:772.10px;top:414.80px;font-size:7.62px;transform:scaleX(0.9715);">Ravindra Rao Usha</div>
<div class="t " style="left:845.30px;top:414.80px;font-size:7.62px;transform:scaleX(1.0059);">skpadhy</div>
<div class="t " style="left:886.90px;top:414.80px;font-size:7.62px;transform:scaleX(1.0090);">11/23/2022 3:30:24 PM</div>
<div class="t l" style="left:34.30px;top:430.58px;font-size:7.62px;transform:scaleX(0.9605);">BS00020501</div>
<div class="t " style="left:88.90px;top:430.58px;font-size:7.62px;transform:scaleX(0.9940);">00008105</div>
<div class="t " style="left:137.80px;top:430.58px;font-size:7.62px;transform:scaleX(1.0003);">Invoice archieve</div>
<div class="t " style="left:414.70px;top:430.58px;font-size:7.62px;transform:scaleX(1.0576);">2/8/2023</div>
<div class="t " style="left:466.70px;top:430.58px;font-size:7.62px;transform:scaleX(1.0041);">Daily</div>
<div class="t " style="left:509.20px;top:430.58px;font-size:7.62px;transform:scaleX(1.0497);">2/10/2023</div>
<div class="t " style="left:583.50px;top:430.58px;font-size:7.62px;transform:scaleX(1.0497);">2/11/2023</div>
<div class="t " style="left:657.50px;top:430.58px;font-size:7.62px;transform:scaleX(1.0150);">Pending</div>
<svg style="left:702.2px;top:433.62px" width="6" height="5.4" viewBox="0 0 6 5.4"><path d="M0.4 0.3 L5.6 5.1 M5.6 0.3 L0.4 5.1" stroke="#d13b40" stroke-width="1.15"/></svg>
<div class="t " style="left:716.20px;top:430.58px;font-size:7.62px;transform:scaleX(1.0201);">Billing is due</div>
<div class="t " style="left:772.10px;top:430.58px;font-size:7.62px;transform:scaleX(0.9715);">Ravindra Rao Usha</div>
<div class="t " style="left:845.30px;top:430.58px;font-size:7.62px;transform:scaleX(0.9363);">ShivaniK...</div>
<div class="t " style="left:886.90px;top:430.58px;font-size:7.62px;transform:scaleX(1.0107);">2/8/2023 1:06:26 PM</div>
<div class="t l" style="left:34.30px;top:446.36px;font-size:7.62px;transform:scaleX(0.9605);">BS00029918</div>
<div class="t " style="left:88.90px;top:446.36px;font-size:7.62px;transform:scaleX(0.9940);">00005478</div>
<div class="t " style="left:137.80px;top:446.36px;font-size:7.62px;transform:scaleX(0.9476);">IDR1</div>
<div class="t " style="left:358.50px;top:446.36px;font-size:7.62px;transform:scaleX(1.0576);">9/6/2022</div>
<div class="t " style="left:414.70px;top:446.36px;font-size:7.62px;transform:scaleX(1.0497);">5/15/2023</div>
<div class="t " style="left:466.70px;top:446.36px;font-size:7.62px;transform:scaleX(1.0008);">Weekly</div>
<div class="t " style="left:509.20px;top:446.36px;font-size:7.62px;transform:scaleX(1.0497);">5/17/2023</div>
<div class="t " style="left:583.50px;top:446.36px;font-size:7.62px;transform:scaleX(1.0497);">5/18/2023</div>
<div class="t " style="left:657.50px;top:446.36px;font-size:7.62px;transform:scaleX(1.0150);">Pending</div>
<svg style="left:702.2px;top:449.40px" width="6" height="5.4" viewBox="0 0 6 5.4"><path d="M0.4 0.3 L5.6 5.1 M5.6 0.3 L0.4 5.1" stroke="#d13b40" stroke-width="1.15"/></svg>
<div class="t " style="left:716.20px;top:446.36px;font-size:7.62px;transform:scaleX(1.0201);">Billing is due</div>
<div class="t " style="left:772.10px;top:446.36px;font-size:7.62px;transform:scaleX(0.9715);">Ravindra Rao Usha</div>
<div class="t " style="left:845.30px;top:446.36px;font-size:7.62px;transform:scaleX(0.9341);">UshaR</div>
<div class="t " style="left:886.90px;top:446.36px;font-size:7.62px;transform:scaleX(1.0172);">5/22/2023 11:04:33 AM</div>
<svg style="left:18px;top:211.3px" width="8" height="8" viewBox="0 0 8 8"><circle cx="4" cy="4" r="3.55" fill="#fff" stroke="#605e5c" stroke-width="0.65"/></svg>
<div class="abs" style="left:12.6px;top:458.2px;width:975px;height:0.6px;background:#e1dfdd"></div>
<div class="abs" style="left:991.1px;top:209.8px;width:4.5px;height:231.4px;background:#bebcba;border-radius:2.3px"></div>
<div class="abs" style="left:16px;top:462.6px;width:970px;height:3px;background:#8a8886;border-radius:2px"></div>
<div class="abs" style="left:0;top:21.6px;width:1px;height:443px;background:#e1dfdd"></div>
</body></html>
